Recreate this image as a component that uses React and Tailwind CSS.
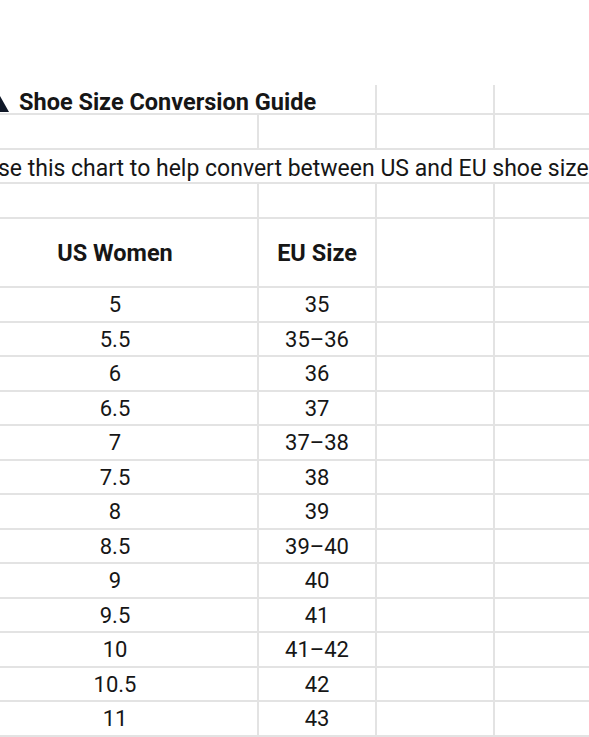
import React from 'react';

const rows = [
  ['5', '35'],
  ['5.5', '35–36'],
  ['6', '36'],
  ['6.5', '37'],
  ['7', '37–38'],
  ['7.5', '38'],
  ['8', '39'],
  ['8.5', '39–40'],
  ['9', '40'],
  ['9.5', '41'],
  ['10', '41–42'],
  ['10.5', '42'],
  ['11', '43'],
];

function Row({ h, children }) {
  return (
    <div className={`grid grid-cols-[286px_118px_118px_118px] border-b-2 border-[#e3e3e3] ${h}`}>
      {children}
    </div>
  );
}

function Cell({ children, className = '' }) {
  return (
    <div className={`flex items-center justify-center border-r-2 border-[#e3e3e3] ${className}`}>
      {children}
    </div>
  );
}

export default function App() {
  return (
    <div className="w-[589px] h-[737px] overflow-hidden bg-white text-[22px] text-[#161616] font-['Roboto',sans-serif]">
      <div className="h-[85px]" />
      <div className="-ml-[27px] w-[640px]">
        <Row h="h-[30px]">
          <div className="col-span-2 flex items-center gap-[10px] pl-[19px] border-r-2 border-[#e3e3e3]">
            <svg width="17" height="18" viewBox="0 0 17 18" className="mt-[2px] shrink-0">
              <polygon points="8,1 17,17 8,17" fill="#101828" />
            </svg>
            <span className="font-bold text-[23.5px] whitespace-nowrap">Shoe Size Conversion Guide</span>
          </div>
          <Cell />
          <Cell />
        </Row>
        <Row h="h-[35px]">
          <Cell />
          <Cell />
          <Cell />
          <Cell />
        </Row>
        <Row h="h-[34px]">
          <div className="col-span-4 flex items-center pl-[10px] pt-[2px] text-[23px] whitespace-nowrap">
            Use this chart to help convert between US and EU shoe sizes.
          </div>
        </Row>
        <Row h="h-[35px]">
          <Cell />
          <Cell />
          <Cell />
          <Cell />
        </Row>
        <Row h="h-[69px]">
          <Cell className="font-bold text-[23.5px] pt-[2px]">US Women</Cell>
          <Cell className="font-bold text-[23.5px] pt-[2px]">EU Size</Cell>
          <Cell />
          <Cell />
        </Row>
        {rows.map(([us, eu], i) => (
          <Row key={us} h={i % 2 === 0 ? 'h-[35px]' : 'h-[34px]'}>
            <Cell>{us}</Cell>
            <Cell>{eu}</Cell>
            <Cell />
            <Cell />
          </Row>
        ))}
      </div>
    </div>
  );
}
